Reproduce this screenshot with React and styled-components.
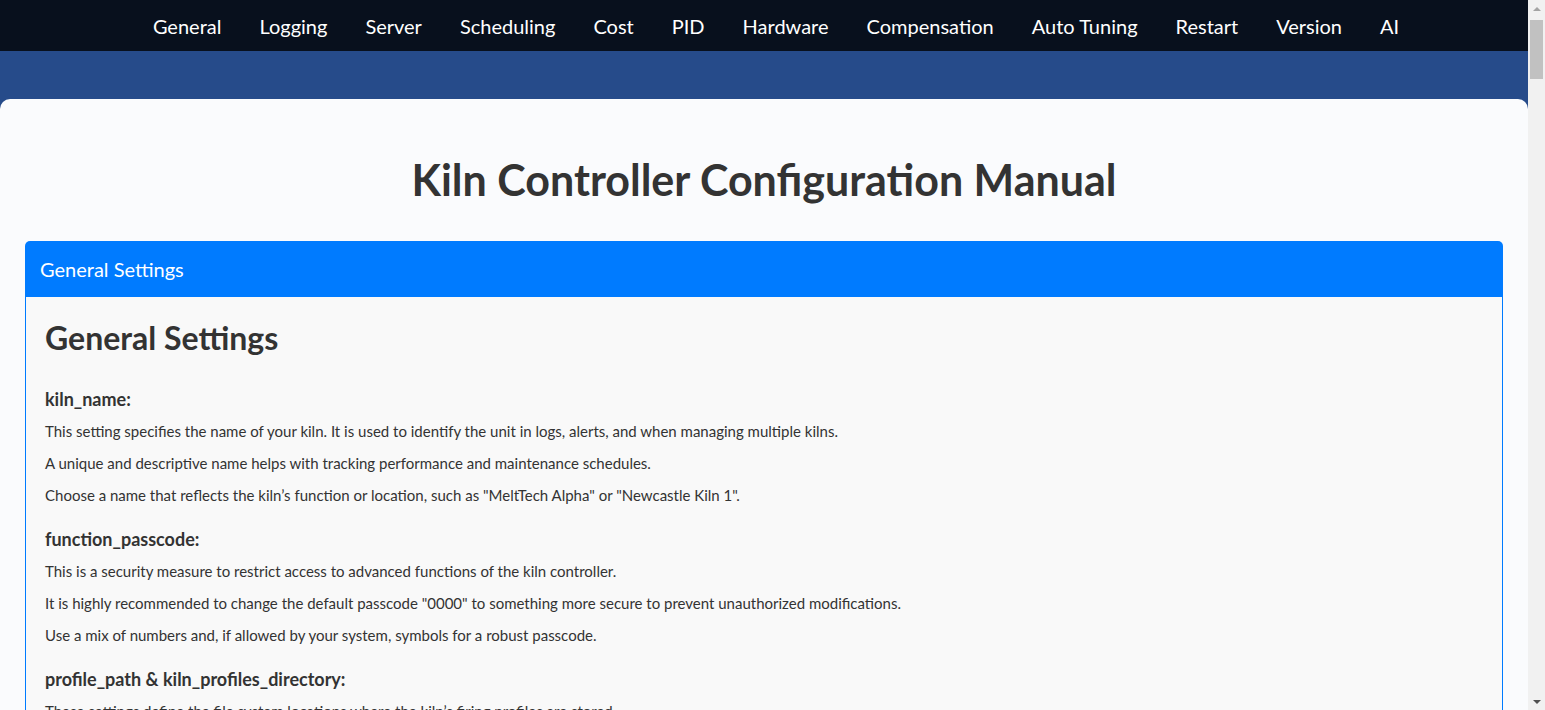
import styled, { createGlobalStyle } from 'styled-components';

const GlobalStyle = createGlobalStyle`
  html, body {
    margin: 0;
    padding: 0;
  }
  body {
    background: #264b8a;
    font-family: Lato, "Open Sans", "Liberation Sans", sans-serif;
    color: #333;
  }
`;

const Viewport = styled.div`
  display: flex;
  align-items: flex-start;
`;

const Content = styled.div`
  flex: 1;
  min-width: 0;
`;

// the page scrollbar seen in the screenshot
const ScrollTrack = styled.div`
  position: sticky;
  top: 0;
  display: flex;
  flex-direction: column;
  justify-content: space-between;
  width: 17px;
  height: 100vh;
  background: #f1f1f1;
  flex-shrink: 0;
`;

const ScrollArrow = styled.div`
  display: flex;
  align-items: center;
  justify-content: center;
  height: 17px;
  &::before {
    content: '';
    width: 0;
    height: 0;
    border-left: 4px solid transparent;
    border-right: 4px solid transparent;
    ${(p) =>
      p.$down
        ? 'border-top: 4px solid #505050;'
        : 'border-bottom: 4px solid #a3a3a3;'}
  }
`;

const ScrollThumb = styled.div`
  height: 59px;
  margin: 0 2px;
  background: #c1c1c1;
`;

const ScrollRail = styled.div`
  flex: 1;
  padding-top: 3px;
`;

const NavBar = styled.nav`
  display: flex;
  justify-content: center;
  align-items: center;
  gap: 38px;
  height: 51px;
  padding-left: 24px;
  background: #08101d;
`;

const NavLink = styled.a`
  color: #fff;
  font-size: 20px;
  text-decoration: none;
  line-height: 1;
  cursor: pointer;
`;

const Page = styled.main`
  padding-top: 48px;
`;

const Card = styled.div`
  background: #fafbfd;
  border-radius: 10px 10px 0 0;
  padding: 0 25px 40px;
`;

const Title = styled.h1`
  margin: 0;
  padding: 57px 0 37px;
  text-align: center;
  font-size: 43px;
  line-height: 48px;
  font-weight: 700;
  color: #333;
`;

const SectionHeader = styled.div`
  display: flex;
  align-items: center;
  height: 56px;
  padding: 0 15px;
  background: #007bff;
  color: #fff;
  font-size: 20px;
  border-radius: 5px 5px 0 0;
`;

const SectionBody = styled.div`
  background: #f9f9f9;
  border: 1px solid #007bff;
  border-top: none;
  padding: 20px 19px;
`;

const SectionTitle = styled.h2`
  margin: 0 0 24px;
  font-size: 32px;
  line-height: 42px;
  font-weight: 700;
  color: #333;
`;

const Setting = styled.p`
  margin: 0 0 12px;
  font-size: 15px;
  line-height: 32px;
  color: #333;
`;

const Key = styled.strong`
  display: block;
  font-size: 18px;
  font-weight: 700;
`;

const Line = styled.span`
  display: block;
`;

const navItems = [
  'General',
  'Logging',
  'Server',
  'Scheduling',
  'Cost',
  'PID',
  'Hardware',
  'Compensation',
  'Auto Tuning',
  'Restart',
  'Version',
  'AI',
];

const settings = [
  {
    key: 'kiln_name:',
    lines: [
      'This setting specifies the name of your kiln. It is used to identify the unit in logs, alerts, and when managing multiple kilns.',
      'A unique and descriptive name helps with tracking performance and maintenance schedules.',
      'Choose a name that reflects the kiln’s function or location, such as "MeltTech Alpha" or "Newcastle Kiln 1".',
    ],
  },
  {
    key: 'function_passcode:',
    lines: [
      'This is a security measure to restrict access to advanced functions of the kiln controller.',
      'It is highly recommended to change the default passcode "0000" to something more secure to prevent unauthorized modifications.',
      'Use a mix of numbers and, if allowed by your system, symbols for a robust passcode.',
    ],
  },
  {
    key: 'profile_path & kiln_profiles_directory:',
    lines: [
      'These settings define the file system locations where the kiln’s firing profiles are stored.',
      'Make sure the directories exist and that the controller has permission to read and write to them.',
      'Keeping profiles in a dedicated folder makes backups and restores much easier.',
    ],
  },
];

export default function App() {
  return (
    <>
      <GlobalStyle />
      <Viewport>
        <Content>
          <NavBar>
            {navItems.map((item) => (
              <NavLink key={item}>{item}</NavLink>
            ))}
          </NavBar>
          <Page>
            <Card>
              <Title>Kiln Controller Configuration Manual</Title>
              <SectionHeader>General Settings</SectionHeader>
              <SectionBody>
                <SectionTitle>General Settings</SectionTitle>
                {settings.map((s) => (
                  <Setting key={s.key}>
                    <Key>{s.key}</Key>
                    {s.lines.map((l) => (
                      <Line key={l}>{l}</Line>
                    ))}
                  </Setting>
                ))}
              </SectionBody>
            </Card>
          </Page>
        </Content>
        <ScrollTrack>
          <ScrollArrow />
          <ScrollRail>
            <ScrollThumb />
          </ScrollRail>
          <ScrollArrow $down />
        </ScrollTrack>
      </Viewport>
    </>
  );
}
